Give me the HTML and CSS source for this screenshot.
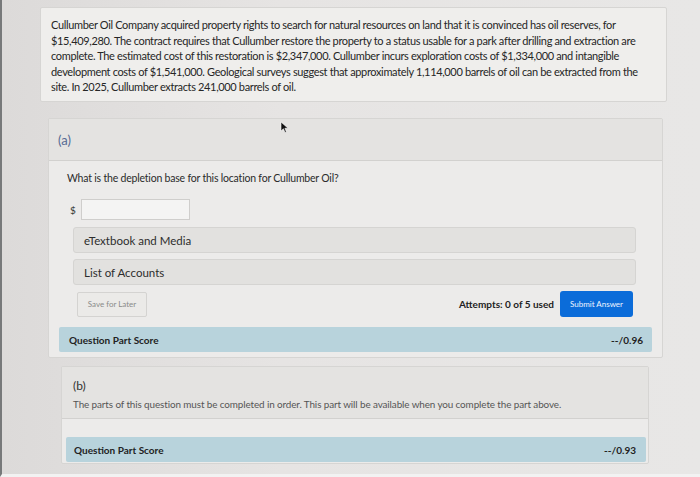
FILE: index.html
```html
<!DOCTYPE html>
<html>
<head>
<meta charset="utf-8">
<link rel="stylesheet" href="styles.css">
</head>
<body>
<div class="screen">
  <div class="problem">
    Cullumber Oil Company acquired property rights to search for natural resources on land that it is convinced has oil reserves, for $15,409,280. The contract requires that Cullumber restore the property to a status usable for a park after drilling and extraction are complete. The estimated cost of this restoration is $2,347,000. Cullumber incurs exploration costs of $1,334,000 and intangible development costs of $1,541,000. Geological surveys suggest that approximately 1,114,000 barrels of oil can be extracted from the site. In 2025, Cullumber extracts 241,000 barrels of oil.
  </div>

  <div class="part part-a">
    <div class="part-head"><span class="part-label">(a)</span></div>
    <div class="part-body">
      <p class="question">What is the depletion base for this location for Cullumber Oil?</p>
      <div class="answer-row">
        <span class="dollar">$</span>
        <span class="answer-box"></span>
      </div>
      <div class="resource">eTextbook and Media</div>
      <div class="resource">List of Accounts</div>
      <div class="actions">
        <span class="btn-save">Save for Later</span>
        <span class="attempts">Attempts: 0 of 5 used</span>
        <span class="btn-submit">Submit Answer</span>
      </div>
    </div>
    <div class="score score-a">
      <span>Question Part Score</span>
      <span>--/0.96</span>
    </div>
  </div>

  <div class="part part-b">
    <div class="part-head head-b">
      <div class="part-label-b">(b)</div>
      <div class="locked">The parts of this question must be completed in order. This part will be available when you complete the part above.</div>
    </div>
    <div class="gap-b"></div>
    <div class="score score-b">
      <span>Question Part Score</span>
      <span>--/0.93</span>
    </div>
  </div>

  <svg class="cursor" width="9" height="13" viewBox="0 0 9 13"><path d="M1 1 L1 10 L3.4 7.8 L5 11.5 L6.4 10.9 L4.9 7.3 L8 7.2 Z" fill="#111" stroke="#fff" stroke-width="0.6"/></svg>
</div>
</body>
</html>
```
FILE: styles.css
```css
html, body {
  margin: 0;
  padding: 0;
}
body {
  width: 700px;
  height: 477px;
  overflow: hidden;
  background: #e4e2e1;
  font-family: Lato, "Open Sans", sans-serif;
  color: #2a2a2a;
}
.screen {
  position: relative;
  height: 474px;
  border-left: 2px solid #77797a;
  border-bottom: 3px solid #f2f2f2;
  background: linear-gradient(90deg, #dcdad9 0%, #e6e4e3 40%, #e8e7e6 100%);
  display: flex;
  flex-direction: column;
}
.problem {
  margin: 7px 33px 0 38px;
  height: 76px;
  padding: 9px 10px 8px 10px;
  background: #efeeec;
  border: 1px solid #d6d5d3;
  border-radius: 2px;
  font-size: 11px;
  line-height: 15.5px;
  letter-spacing: -0.35px;
  color: #262626;
}
.part {
  background: #ecebea;
  border: 1px solid #d6d5d3;
  border-radius: 2px;
}
.part-a {
  margin: 16px 37px 0 46px;
  display: flex;
  flex-direction: column;
}
.part-head {
  background: #e4e3e1;
  border-bottom: 1px solid #d2d1cf;
}
.part-a .part-head {
  height: 41px;
  display: flex;
  align-items: center;
  padding-left: 9px;
}
.part-label {
  font-size: 13px;
  color: #566a93;
}
.part-body {
  padding: 10px 26px 10px 18px;
  display: flex;
  flex-direction: column;
}
.question {
  margin: 0 0 14px 0;
  font-size: 10.5px;
  line-height: 14px;
  letter-spacing: -0.2px;
  color: #2b2b2b;
}
.answer-row {
  display: flex;
  align-items: center;
  gap: 5px;
  margin-left: 3px;
  margin-bottom: 7px;
}
.dollar {
  font-size: 10px;
  color: #333;
}
.answer-box {
  width: 107px;
  height: 19px;
  background: #f4f4f3;
  border: 1px solid #cfcecc;
}
.resource {
  margin: 0 0 6px 6px;
  height: 24px;
  display: flex;
  align-items: center;
  padding-left: 10px;
  background: #e2e1df;
  border: 1px solid #d5d4d2;
  border-radius: 3px;
  font-size: 11.5px;
  color: #2d2d2d;
}
.actions {
  display: flex;
  align-items: center;
  margin: 0 3px 0 10px;
}
.btn-save {
  width: 68px;
  height: 23px;
  display: flex;
  align-items: center;
  justify-content: center;
  border: 1px solid #d4d3d1;
  border-radius: 2px;
  background: #ebeae8;
  font-size: 8px;
  color: #8a8a8a;
}
.attempts {
  margin-left: auto;
  margin-right: 6px;
  font-size: 10px;
  font-weight: bold;
  color: #222;
}
.btn-submit {
  width: 73px;
  height: 26px;
  display: flex;
  align-items: center;
  justify-content: center;
  background: #0b6cd9;
  border-radius: 3px;
  color: #eef4ff;
  font-size: 8px;
}
.score {
  display: flex;
  justify-content: space-between;
  align-items: center;
  background: #b8d3dc;
  font-size: 10px;
  font-weight: bold;
  color: #222;
  border-radius: 2px;
}
.score-a {
  margin: 0 10px 5px 10px;
  height: 25px;
  padding: 0 9px 0 10px;
}
.part-b {
  margin: 8px 51px 0 59px;
  height: 96px;
  display: flex;
  flex-direction: column;
}
.head-b {
  height: 52px;
  padding: 11px 0 0 11px;
  box-sizing: border-box;
}
.part-label-b {
  font-size: 12px;
  line-height: 16px;
  color: #333;
}
.locked {
  margin-top: 4px;
  font-size: 9.9px;
  line-height: 12px;
  color: #555;
  letter-spacing: -0.1px;
}
.gap-b {
  height: 18px;
}
.score-b {
  margin: 0 2px 0 4px;
  height: 25px;
  padding: 0 10px 0 8px;
}
.cursor {
  position: absolute;
  left: 278px;
  top: 121px;
}
```
